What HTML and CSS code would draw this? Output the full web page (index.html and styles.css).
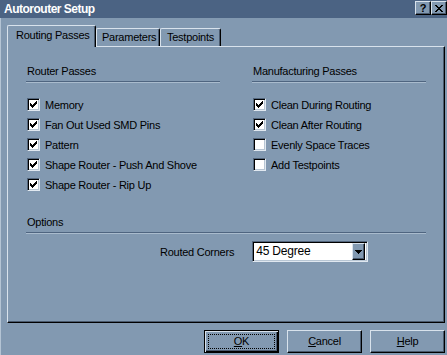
FILE: index.html
```html
<!DOCTYPE html>
<html>
<head>
<meta charset="utf-8">
<link rel="stylesheet" href="styles.css">
</head>
<body>
<div class="titlebar">
  <span class="title">Autorouter Setup</span>
  <div class="tb-btns">
    <span class="tb-btn q">?</span>
    <span class="tb-btn"><svg width="8" height="7" viewBox="0 0 8 7" shape-rendering="crispEdges"><path d="M0 0h2v1h-2zM6 0h2v1h-2zM1 1h2v1h-2zM5 1h2v1h-2zM2 2h4v1h-4zM3 3h2v1h-2zM2 4h4v1h-4zM1 5h2v1h-2zM5 5h2v1h-2zM0 6h2v1h-2zM6 6h2v1h-2z" fill="#000"/></svg></span>
  </div>
</div>
<div class="content">
  <div class="tabs">
    <div class="tab active">Routing Passes</div>
    <div class="tab t2">Parameters</div>
    <div class="tab t3">Testpoints</div>
  </div>
  <div class="panel">
    <div class="columns">
      <div class="group">
        <div class="heading">Router Passes</div>
        <div class="checks">
          <div class="check"><span class="box"><svg class="tick" width="7" height="7" viewBox="0 0 7 7" shape-rendering="crispEdges"><path d="M6 0h1v1h-1zM5 1h2v1h-2zM0 2h1v1h-1zM4 2h3v1h-3zM0 3h2v1h-2zM3 3h3v1h-3zM0 4h5v1h-5zM1 5h3v1h-3zM2 6h1v1h-1z" fill="#000"/></svg></span><span class="lbl">Memory</span></div>
          <div class="check"><span class="box"><svg class="tick" width="7" height="7" viewBox="0 0 7 7" shape-rendering="crispEdges"><path d="M6 0h1v1h-1zM5 1h2v1h-2zM0 2h1v1h-1zM4 2h3v1h-3zM0 3h2v1h-2zM3 3h3v1h-3zM0 4h5v1h-5zM1 5h3v1h-3zM2 6h1v1h-1z" fill="#000"/></svg></span><span class="lbl">Fan Out Used SMD Pins</span></div>
          <div class="check"><span class="box"><svg class="tick" width="7" height="7" viewBox="0 0 7 7" shape-rendering="crispEdges"><path d="M6 0h1v1h-1zM5 1h2v1h-2zM0 2h1v1h-1zM4 2h3v1h-3zM0 3h2v1h-2zM3 3h3v1h-3zM0 4h5v1h-5zM1 5h3v1h-3zM2 6h1v1h-1z" fill="#000"/></svg></span><span class="lbl">Pattern</span></div>
          <div class="check"><span class="box"><svg class="tick" width="7" height="7" viewBox="0 0 7 7" shape-rendering="crispEdges"><path d="M6 0h1v1h-1zM5 1h2v1h-2zM0 2h1v1h-1zM4 2h3v1h-3zM0 3h2v1h-2zM3 3h3v1h-3zM0 4h5v1h-5zM1 5h3v1h-3zM2 6h1v1h-1z" fill="#000"/></svg></span><span class="lbl">Shape Router - Push And Shove</span></div>
          <div class="check"><span class="box"><svg class="tick" width="7" height="7" viewBox="0 0 7 7" shape-rendering="crispEdges"><path d="M6 0h1v1h-1zM5 1h2v1h-2zM0 2h1v1h-1zM4 2h3v1h-3zM0 3h2v1h-2zM3 3h3v1h-3zM0 4h5v1h-5zM1 5h3v1h-3zM2 6h1v1h-1z" fill="#000"/></svg></span><span class="lbl">Shape Router - Rip Up</span></div>
        </div>
      </div>
      <div class="group">
        <div class="heading">Manufacturing Passes</div>
        <div class="checks">
          <div class="check"><span class="box"><svg class="tick" width="7" height="7" viewBox="0 0 7 7" shape-rendering="crispEdges"><path d="M6 0h1v1h-1zM5 1h2v1h-2zM0 2h1v1h-1zM4 2h3v1h-3zM0 3h2v1h-2zM3 3h3v1h-3zM0 4h5v1h-5zM1 5h3v1h-3zM2 6h1v1h-1z" fill="#000"/></svg></span><span class="lbl">Clean During Routing</span></div>
          <div class="check"><span class="box"><svg class="tick" width="7" height="7" viewBox="0 0 7 7" shape-rendering="crispEdges"><path d="M6 0h1v1h-1zM5 1h2v1h-2zM0 2h1v1h-1zM4 2h3v1h-3zM0 3h2v1h-2zM3 3h3v1h-3zM0 4h5v1h-5zM1 5h3v1h-3zM2 6h1v1h-1z" fill="#000"/></svg></span><span class="lbl">Clean After Routing</span></div>
          <div class="check"><span class="box"></span><span class="lbl">Evenly Space Traces</span></div>
          <div class="check"><span class="box"></span><span class="lbl">Add Testpoints</span></div>
        </div>
      </div>
    </div>
    <div class="heading options">Options</div>
    <div class="option-row">
      <span class="opt-label">Routed Corners</span>
      <div class="select">
        <span class="sel-text">45 Degree</span>
        <span class="sel-btn"><svg width="7" height="4" viewBox="0 0 7 4" shape-rendering="crispEdges"><path d="M0 0h7v1h-7zM1 1h5v1h-5zM2 2h3v1h-3zM3 3h1v1h-1z" fill="#000"/></svg></span>
      </div>
    </div>
  </div>
  <div class="buttons">
    <div class="btn default"><span class="focus"><u>O</u>K</span></div>
    <div class="btn"><span><u>C</u>ancel</span></div>
    <div class="btn"><span><u>H</u>elp</span></div>
  </div>
</div>
</body>
</html>
```

FILE: styles.css
```css
* { box-sizing: border-box; }
html, body { margin: 0; padding: 0; }
body {
  width: 447px;
  height: 355px;
  overflow: hidden;
  background: #8299b1;
  font-family: "Liberation Sans", Arial, sans-serif;
  font-size: 11px;
  line-height: 13px;
  letter-spacing: -0.25px;
  color: #000;
}
.titlebar {
  height: 18px;
  background: #4b6383;
  display: flex;
  align-items: flex-start;
  padding-left: 4px;
}
.title {
  flex: 1;
  color: #fff;
  font-weight: bold;
  font-size: 12px;
  line-height: 14px;
  letter-spacing: -0.5px;
  margin-top: 2px;
}
.tb-btns {
  display: flex;
  margin-top: 1px;
}
.tb-btn {
  width: 16px;
  height: 14px;
  background: #8299b1;
  border-top: 1px solid #d8e2ec;
  border-left: 1px solid #d8e2ec;
  border-right: 1px solid #000;
  border-bottom: 1px solid #000;
  box-shadow: inset -1px -1px 0 #4a5a6e;
  display: flex;
  align-items: center;
  justify-content: center;
  font-weight: bold;
  font-size: 11px;
  line-height: 11px;
  letter-spacing: 0;
}
.content {
  height: 337px;
  border-left: 1px solid #b4c4d4;
  padding: 7px 0 0 6px;
}
.tabs {
  display: flex;
  align-items: flex-end;
  height: 21px;
}
.tab {
  height: 18px;
  border-top: 1px solid #d8e2ec;
  border-left: 1px solid #d8e2ec;
  border-right: 1px solid #000;
  border-radius: 2px 2px 0 0;
  box-shadow: inset -1px 0 0 #4a5a6e;
  padding: 2px 0 0 6px;
}
.tab.active {
  position: relative;
  z-index: 1;
  width: 89px;
  height: 22px;
  margin-bottom: -1px;
  background: #8299b1;
  padding: 3px 0 0 8px;
}
.tab.t2 { width: 64px; padding-left: 5px; }
.tab.t3 { width: 61px; padding-left: 6px; }
.panel {
  width: 438px;
  height: 277px;
  border-top: 1px solid #d8e2ec;
  border-left: 1px solid #d8e2ec;
  border-right: 1px solid #000;
  border-bottom: 1px solid #000;
  box-shadow: inset -1px -1px 0 #4a5a6e;
  padding: 18px 0 0 18px;
}
.columns {
  display: grid;
  grid-template-columns: 194px 174px;
  column-gap: 32px;
}
.heading {
  padding: 0 0 3px 1px;
  border-bottom: 1px solid #4f6580;
  box-shadow: 0 1px 0 #a9bbcd;
}
.heading.options {
  width: 400px;
  margin-top: 25px;
}
.checks {
  margin-top: 16px;
  display: flex;
  flex-direction: column;
  gap: 7px;
}
.check {
  display: flex;
  align-items: center;
  height: 13px;
  gap: 5px;
  padding-left: 1px;
}
.lbl { margin-top: 1px; }
.box {
  width: 13px;
  height: 13px;
  flex: none;
  background: #fff;
  border-top: 1px solid #53667d;
  border-left: 1px solid #53667d;
  border-right: 1px solid #e0e8f0;
  border-bottom: 1px solid #e0e8f0;
  box-shadow: inset 1px 1px 0 #000, inset -1px -1px 0 #b8c6d4;
  display: flex;
  align-items: center;
  justify-content: center;
}
.tick { display: block; }
.option-row {
  display: flex;
  align-items: center;
  gap: 18px;
  margin-top: 8px;
  padding-left: 134px;
}
.opt-label { margin-top: 1px; }
.select {
  width: 116px;
  height: 21px;
  background: #fff;
  border-top: 1px solid #53667d;
  border-left: 1px solid #53667d;
  border-right: 1px solid #e0e8f0;
  border-bottom: 1px solid #e0e8f0;
  box-shadow: inset 1px 1px 0 #000, inset -1px -1px 0 #b8c6d4;
  display: flex;
  align-items: center;
  padding: 2px 2px 2px 3px;
}
.sel-text {
  flex: 1;
  font-size: 12px;
  letter-spacing: -0.2px;
}
.sel-btn {
  width: 13px;
  height: 17px;
  background: #8299b1;
  border-top: 1px solid #d8e2ec;
  border-left: 1px solid #d8e2ec;
  border-right: 1px solid #000;
  border-bottom: 1px solid #000;
  box-shadow: inset -1px -1px 0 #4a5a6e;
  display: flex;
  align-items: center;
  justify-content: center;
}
.buttons {
  display: flex;
  justify-content: flex-end;
  gap: 8px;
  margin-top: 7px;
  padding-right: 2px;
}
.btn {
  width: 75px;
  height: 23px;
  border-top: 1px solid #d8e2ec;
  border-left: 1px solid #d8e2ec;
  border-right: 1px solid #000;
  border-bottom: 1px solid #000;
  box-shadow: inset -1px -1px 0 #4a5a6e;
  display: flex;
  align-items: center;
  justify-content: center;
}
.btn.default {
  border: 1px solid #000;
  box-shadow: inset 1px 1px 0 #d8e2ec, inset -1px -1px 0 #000, inset -2px -2px 0 #4a5a6e;
  padding: 3px;
}
.btn.default .focus {
  width: 100%;
  height: 100%;
  border: 1px dotted #000;
  display: flex;
  align-items: center;
  justify-content: center;
}
u { text-decoration: underline; text-underline-offset: 1px; }
```
